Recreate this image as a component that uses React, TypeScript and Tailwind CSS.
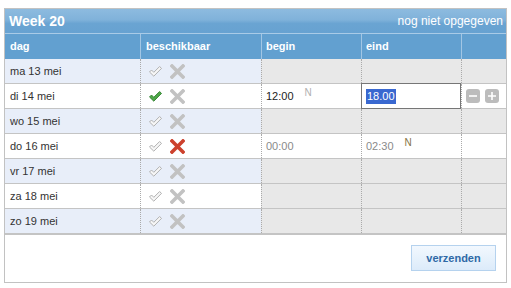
import React from "react";

type Row = {
  day: string;
  state: "none" | "yes" | "no";
  begin?: string;
  end?: string;
  beginN?: boolean;
  endN?: boolean;
  editing?: boolean;
};

const rows: Row[] = [
  { day: "ma 13 mei", state: "none" },
  { day: "di 14 mei", state: "yes", begin: "12:00", beginN: true, end: "18.00", editing: true },
  { day: "wo 15 mei", state: "none" },
  { day: "do 16 mei", state: "no", begin: "00:00", end: "02:30", endN: true },
  { day: "vr 17 mei", state: "none" },
  { day: "za 18 mei", state: "none" },
  { day: "zo 19 mei", state: "none" },
];

function Check({ green }: { green: boolean }) {
  return (
    <svg width="13" height="11" viewBox="0 0 13 11" className="block">
      <polygon
        points="0.5,6 2.5,4 4.8,6.3 10.6,0.5 12.5,2.4 4.8,10.2"
        fill={green ? "#4fa84a" : "#f6f6f6"}
        stroke={green ? "#2f7f2c" : "#a9a9a9"}
        strokeWidth="0.9"
        strokeLinejoin="round"
      />
    </svg>
  );
}

function Cross({ red }: { red: boolean }) {
  const c = red ? "#cc412d" : "#c2c2c2";
  return (
    <svg width="15" height="15" viewBox="0 0 15 15" className="block">
      <path d="M2 2 L13 13 M13 2 L2 13" stroke={c} strokeWidth="3.6" strokeLinecap="square" />
    </svg>
  );
}

function SmallBtn({ plus }: { plus: boolean }) {
  return (
    <div className="w-[14px] h-[14px] rounded-[3px] bg-[#bcbcbc] flex items-center justify-center">
      <svg width="10" height="10" viewBox="0 0 10 10">
        <path d={plus ? "M1 5 H9 M5 1 V9" : "M1 5 H9"} stroke="#ffffff" strokeWidth="1.6" />
      </svg>
    </div>
  );
}

export default function App() {
  return (
    <div
      className="w-[511px] h-[288px] bg-white pt-[8px] pl-[4px]"
      style={{ fontFamily: '"Liberation Sans", Arial, sans-serif' }}
    >
      <div className="w-[503px] border border-[#c2c2c2]">
        {/* title bar */}
        <div className="h-[24px] flex items-center justify-between pl-[4px] pr-[3px] bg-[linear-gradient(to_bottom,#8dbbdf_0%,#80b2da_45%,#6aa4d2_60%,#67a2d1_100%)]">
          <span className="text-white font-bold text-[14px] leading-none">Week 20</span>
          <span className="text-white text-[12px] leading-none">nog niet opgegeven</span>
        </div>
        {/* header row */}
        <div className="flex h-[26px] border-t border-[#a9cbe7] bg-[#62a0d0] text-white font-bold text-[11px]">
          <div className="w-[135px] flex items-center pl-[5px]">dag</div>
          <div className="w-[121px] flex items-center pl-[5px] border-l border-[#a2c6e4]">beschikbaar</div>
          <div className="w-[100px] flex items-center pl-[4px] border-l border-[#a2c6e4]">begin</div>
          <div className="w-[100px] flex items-center pl-[4px] border-l border-[#a2c6e4]">eind</div>
          <div className="w-[45px] border-l border-[#a2c6e4]" />
        </div>
        {/* body rows */}
        {rows.map((r, i) => {
          const odd = i % 2 === 0;
          const leftBg = odd ? "bg-[#e8eef9]" : "bg-white";
          const avail = r.state !== "none" && (r.begin || r.end);
          const rightBg = avail ? "bg-white" : "bg-[#e8e8e8]";
          const timeColor = r.state === "no" ? "text-[#8a8a8a]" : "text-[#222]";
          const last = i === rows.length - 1;
          return (
            <div
              key={r.day}
              className={`flex h-[25px] border-b ${last ? "border-[#c4c4c4]" : "border-[#c4c4c4]"} text-[11px]`}
            >
              <div className={`w-[135px] ${leftBg} flex items-center pl-[5px] text-[#333]`}>{r.day}</div>
              <div
                className={`w-[121px] ${leftBg} flex items-center pl-[8px] gap-[8px] border-l border-dotted border-[#aaaaaa]`}
              >
                <Check green={r.state === "yes"} />
                <Cross red={r.state === "no"} />
              </div>
              <div
                className={`w-[100px] ${rightBg} flex items-center pl-[4px] border-l border-dotted border-[#aaaaaa] ${timeColor}`}
              >
                {r.begin && <span className="mt-[1px]">{r.begin}</span>}
                {r.beginN && (
                  <span className="ml-[11px] mb-[7px] text-[10px] text-[#b0b0b0]">N</span>
                )}
              </div>
              {r.editing ? (
                <div className="w-[100px] bg-white flex items-stretch">
                  <div className="flex-1 flex items-center pl-[4px] border border-[#767676] mt-[-1px] mb-[-1px] bg-white">
                    <span className="bg-[#3968d0] text-white px-[1px] leading-[15px] mt-[1px]">{r.end}</span>
                  </div>
                </div>
              ) : (
                <div
                  className={`w-[100px] ${rightBg} flex items-center pl-[4px] border-l border-dotted border-[#aaaaaa] ${timeColor}`}
                >
                  {r.end && <span className="mt-[1px]">{r.end}</span>}
                  {r.endN && (
                    <span className="ml-[11px] mb-[8px] text-[10px] text-[#857444]">N</span>
                  )}
                </div>
              )}
              <div
                className={`w-[45px] ${rightBg} flex items-center pl-[4px] gap-[5px] border-l border-dotted border-[#aaaaaa]`}
              >
                {r.editing && (
                  <>
                    <SmallBtn plus={false} />
                    <SmallBtn plus={true} />
                  </>
                )}
              </div>
            </div>
          );
        })}
        <div className="h-[1px] bg-[#c4c4c4]" />
        {/* footer */}
        <div className="h-[47px] flex justify-end items-start pt-[10px] pr-[10px]">
          <button className="w-[85px] h-[26px] border border-[#b5d2ee] bg-[linear-gradient(to_bottom,#f2f8fe,#dcebfa)] text-[#2f69a6] font-bold text-[11px]">
            verzenden
          </button>
        </div>
      </div>
    </div>
  );
}
